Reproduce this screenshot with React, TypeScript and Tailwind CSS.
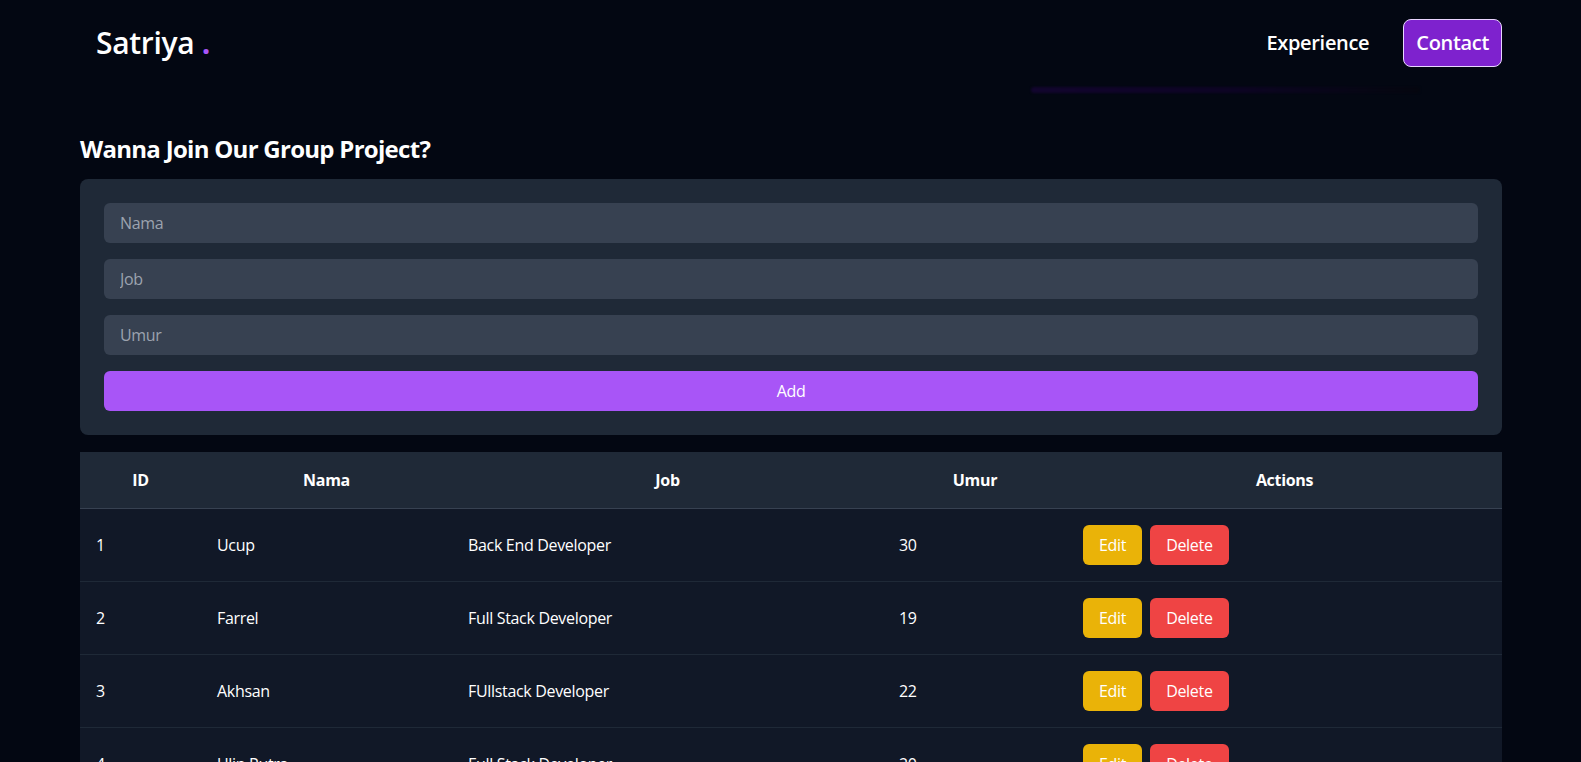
import { useState } from "react";

type Member = {
  id: number;
  nama: string;
  job: string;
  umur: number;
};

const initialMembers: Member[] = [
  { id: 1, nama: "Ucup", job: "Back End Developer", umur: 30 },
  { id: 2, nama: "Farrel", job: "Full Stack Developer", umur: 19 },
  { id: 3, nama: "Akhsan", job: "FUllstack Developer", umur: 22 },
  { id: 4, nama: "Ulin Putra", job: "Full Stack Developer", umur: 20 },
];

const Navbar = () => {
  return (
    <header className="pl-20 pr-[79px]">
      <nav className="flex items-center justify-between h-[86px]">
        <a href="#" className="pl-4 text-[30px] font-semibold text-white leading-none">
          Satriya <span className="text-[#a855f7] font-bold">.</span>
        </a>
        <div className="flex items-center gap-[34px]">
          <a href="#" className="text-xl font-semibold text-white">
            Experience
          </a>
          <a
            href="#"
            className="h-12 px-3 flex items-center rounded-lg border border-[#e9d5ff] bg-[#7e22ce] text-xl font-semibold text-white"
          >
            Contact
          </a>
        </div>
      </nav>
      {/* glow under nav links */}
      <div className="flex justify-end pr-[82px]">
        <div className="w-[389px] h-[6px] mt-[1px] rounded-full bg-gradient-to-r from-[#12052e] via-[#0d0424] to-[#05060f] blur-[1px]" />
      </div>
    </header>
  );
};

const App = () => {
  const [members, setMembers] = useState<Member[]>(initialMembers);
  const [nama, setNama] = useState("");
  const [job, setJob] = useState("");
  const [umur, setUmur] = useState("");

  const addMember = () => {
    if (!nama || !job || !umur) return;
    setMembers([
      ...members,
      { id: members.length + 1, nama, job, umur: Number(umur) },
    ]);
    setNama("");
    setJob("");
    setUmur("");
  };

  const deleteMember = (id: number) => {
    setMembers(members.filter((m) => m.id !== id));
  };

  return (
    <div
      className="min-h-screen bg-[#030712] text-white tracking-[-0.02em]"
      style={{ fontFamily: '"Open Sans", "Noto Sans", sans-serif' }}
    >
      <Navbar />

      <main className="pl-20 pr-[79px] pt-[40px]">
        <h2 className="text-2xl font-bold leading-8 mb-[14px] tracking-[-0.03em]">
          Wanna Join Our Group Project?
        </h2>

        <div className="bg-[#1f2937] rounded-lg p-6 flex flex-col gap-4">
          <input
            className="w-full h-10 px-4 rounded-md bg-[#374151] text-white placeholder-[#9ca3af] outline-none"
            placeholder="Nama"
            value={nama}
            onChange={(e) => setNama(e.target.value)}
          />
          <input
            className="w-full h-10 px-4 rounded-md bg-[#374151] text-white placeholder-[#9ca3af] outline-none"
            placeholder="Job"
            value={job}
            onChange={(e) => setJob(e.target.value)}
          />
          <input
            className="w-full h-10 px-4 rounded-md bg-[#374151] text-white placeholder-[#9ca3af] outline-none"
            placeholder="Umur"
            value={umur}
            onChange={(e) => setUmur(e.target.value)}
          />
          <button
            onClick={addMember}
            className="w-full h-10 rounded-md bg-[#a855f7] text-white"
          >
            Add
          </button>
        </div>

        <table className="w-full mt-[17px] table-fixed border-collapse">
          <colgroup>
            <col className="w-[121px]" />
            <col className="w-[251px]" />
            <col className="w-[431px]" />
            <col className="w-[184px]" />
            <col />
          </colgroup>
          <thead className="bg-[#1f2937]">
            <tr className="border-b border-[#374151]">
              <th className="py-4 font-bold">ID</th>
              <th className="py-4 font-bold">Nama</th>
              <th className="py-4 font-bold">Job</th>
              <th className="py-4 font-bold">Umur</th>
              <th className="py-4 font-bold">Actions</th>
            </tr>
          </thead>
          <tbody className="bg-[#111827]">
            {members.map((m) => (
              <tr key={m.id} className="border-b border-[#1f2937]">
                <td className="px-4 py-4">{m.id}</td>
                <td className="px-4 py-4">{m.nama}</td>
                <td className="px-4 py-4">{m.job}</td>
                <td className="px-4 py-4">{m.umur}</td>
                <td className="px-4 py-4">
                  <div className="flex gap-2">
                    <button className="h-10 px-4 rounded-md bg-[#eab308] text-white">
                      Edit
                    </button>
                    <button
                      onClick={() => deleteMember(m.id)}
                      className="h-10 px-4 rounded-md bg-[#ef4444] text-white"
                    >
                      Delete
                    </button>
                  </div>
                </td>
              </tr>
            ))}
          </tbody>
        </table>
      </main>
    </div>
  );
};

export default App;
